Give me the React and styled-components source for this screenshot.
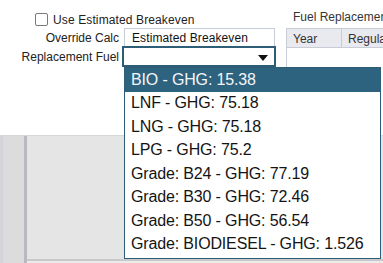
import React from "react";
import styled, { createGlobalStyle } from "styled-components";

const GlobalStyle = createGlobalStyle`
  html, body { margin: 0; padding: 0; background: #ffffff; }
  body {
    width: 383px;
    height: 263px;
    overflow: hidden;
    font-family: "Liberation Sans", Arial, sans-serif;
  }
`;

const Page = styled.div`
  position: relative;
  width: 383px;
  height: 263px;
  display: flex;
  flex-direction: column;
  overflow: hidden;
`;

const TopPanel = styled.div`
  height: 136px;
  flex: none;
  background: #ffffff;
  display: flex;
  border-bottom: 1px solid #d6d6d6;
  box-sizing: border-box;
`;

const Form = styled.div`
  width: 286px;
  flex: none;
  padding-top: 11px;
  display: grid;
  grid-template-columns: 119px 151px;
  grid-template-rows: 17px 18px 21px;
  column-gap: 4px;
  align-content: start;
`;

const CheckRow = styled.label`
  grid-column: 1 / 3;
  display: flex;
  align-items: center;
  padding-left: 35px;
  gap: 5px;
  font-size: 12px;
  letter-spacing: 0.12px;
  color: #222;
`;

const CheckBox = styled.span`
  width: 11px;
  height: 11px;
  border: 1px solid #7a7a7a;
  border-radius: 2px;
  background: #fff;
  flex: none;
`;

const Label = styled.div`
  justify-self: end;
  align-self: end;
  font-size: 12px;
  line-height: 14px;
  color: #222;
  padding-bottom: ${(p) => p.$pb || 0}px;
`;

const TextBox = styled.div`
  box-sizing: border-box;
  height: 18px;
  width: 151px;
  margin-left: 1px;
  border: 1px solid #c8ced8;
  border-bottom: none;
  padding: 2px 0 0 7px;
  font-size: 12px;
  line-height: 14px;
  color: #111;
  letter-spacing: 0.1px;
`;

const SelectBox = styled.div`
  box-sizing: border-box;
  height: 21px;
  width: 154px;
  margin-left: -1px;
  border: 2px solid #2d5d77;
  display: flex;
  align-items: center;
  justify-content: flex-end;
  padding-right: 6px;
`;

const Arrow = styled.span`
  width: 0;
  height: 0;
  margin-top: 2px;
  border-left: 5.5px solid transparent;
  border-right: 5.5px solid transparent;
  border-top: 6px solid #111;
`;

const TablePanel = styled.div`
  flex: 1;
  min-width: 0;
  display: flex;
  flex-direction: column;
  overflow: hidden;
`;

const TableTitle = styled.div`
  height: 28px;
  box-sizing: border-box;
  padding: 10px 0 0 7px;
  font-size: 12px;
  line-height: 14px;
  color: #333;
  white-space: nowrap;
`;

const Table = styled.div`
  flex: 1;
  border-left: 1px solid #c9ccd6;
  border-top: 1px solid #c9ccd6;
`;

const HeaderRow = styled.div`
  display: flex;
  height: 18px;
  background: #e9e9f0;
  border-bottom: 1px solid #c9ccd6;
`;

const HeaderCell = styled.div`
  width: ${(p) => p.$w}px;
  flex: none;
  box-sizing: border-box;
  padding: 3px 0 0 6px;
  font-size: 12px;
  line-height: 14px;
  color: #333;
  white-space: nowrap;
  border-right: ${(p) => (p.$divider ? "1px solid #c9ccd6" : "none")};
`;

const Workspace = styled.div`
  flex: 1;
  display: flex;
  background: #e5e5e5;
`;

const Sidebar = styled.div`
  width: 24px;
  flex: none;
  background: #dcdcdc;
  border-left: 3px solid #d4d4d9;
  box-sizing: border-box;
`;

const Divider = styled.div`
  width: 3px;
  flex: none;
  background: #b9b9c1;
`;

const MainArea = styled.div`
  flex: 1;
  display: flex;
  flex-direction: column;
  justify-content: flex-end;
`;

const BottomBar = styled.div`
  height: 4px;
  border-top: 2px solid #c9c9cb;
  background: #ebebeb;
  box-sizing: border-box;
`;

const Dropdown = styled.div`
  position: absolute;
  left: 124px;
  top: 67px;
  width: 257px;
  box-sizing: border-box;
  background: #ffffff;
  border: 1px solid #2d5d77;
  padding-bottom: 1px;
`;

const Option = styled.div`
  height: ${(p) => (p.$first ? 24 : 23.5)}px;
  box-sizing: border-box;
  padding: ${(p) => (p.$first ? 2 : 1)}px 0 0 6px;
  font-size: 16px;
  line-height: 19px;
  letter-spacing: -0.15px;
  white-space: nowrap;
  color: ${(p) => (p.$active ? "#f4f6f8" : "#141414")};
  background: ${(p) => (p.$active ? "#2e6380" : "transparent")};
`;

const options = [
  "BIO - GHG: 15.38",
  "LNF - GHG: 75.18",
  "LNG - GHG: 75.18",
  "LPG - GHG: 75.2",
  "Grade: B24 - GHG: 77.19",
  "Grade: B30 - GHG: 72.46",
  "Grade: B50 - GHG: 56.54",
  "Grade: BIODIESEL - GHG: 1.526",
];

export default function App() {
  return (
    <>
      <GlobalStyle />
      <Page>
        <TopPanel>
          <Form>
            <CheckRow>
              <CheckBox />
              Use Estimated Breakeven
            </CheckRow>
            <Label $pb={1}>Override Calc</Label>
            <TextBox>Estimated Breakeven</TextBox>
            <Label $pb={3}>Replacement Fuel</Label>
            <SelectBox>
              <Arrow />
            </SelectBox>
          </Form>
          <TablePanel>
            <TableTitle>Fuel Replacement Schedule</TableTitle>
            <Table>
              <HeaderRow>
                <HeaderCell $w={55} $divider>Year</HeaderCell>
                <HeaderCell $w={80}>Regulated</HeaderCell>
              </HeaderRow>
            </Table>
          </TablePanel>
        </TopPanel>
        <Workspace>
          <Sidebar />
          <Divider />
          <MainArea>
            <BottomBar />
          </MainArea>
        </Workspace>
        <Dropdown>
          {options.map((o, i) => (
            <Option key={o} $active={i === 0} $first={i === 0}>
              {o}
            </Option>
          ))}
        </Dropdown>
      </Page>
    </>
  );
}
